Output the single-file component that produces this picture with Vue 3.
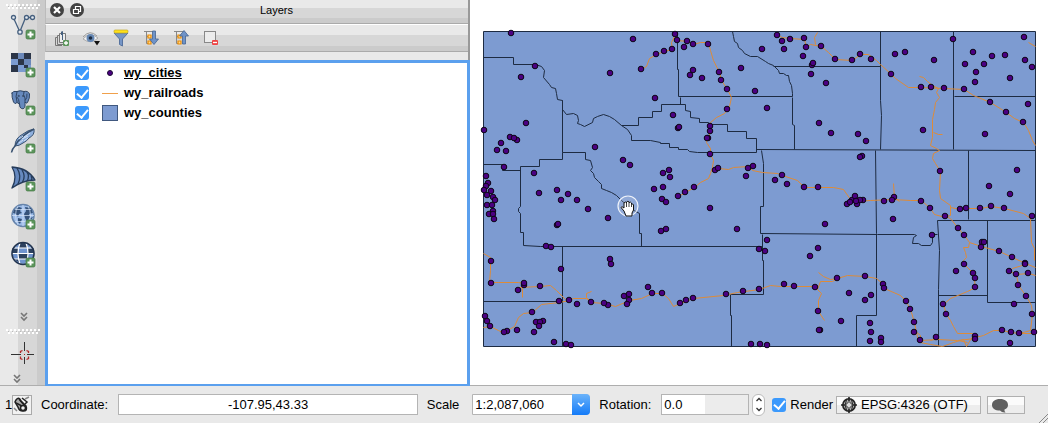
<script setup>
import { ref } from 'vue'

const layers = ref([
  { name: 'wy_cities', kind: 'point', on: true, current: true },
  { name: 'wy_railroads', kind: 'line', on: true, current: false },
  { name: 'wy_counties', kind: 'fill', on: true, current: false }
])
const coordinate = ref('-107.95,43.33')
const rotation = ref('0.0')
const render = ref(true)

const sources = [
  { id: 'vector', label: 'Add vector layer' },
  { id: 'raster', label: 'Add raster layer' },
  { id: 'postgis', label: 'Add PostGIS layer' },
  { id: 'spatialite', label: 'Add SpatiaLite layer' },
  { id: 'mssql', label: 'Add MSSQL layer' },
  { id: 'wms', label: 'Add WMS layer' },
  { id: 'wfs', label: 'Add WFS layer' }
]

const counties = [
  'M483 31H1035V346H483Z',
  'M483 57H513V64H535L541 66 544 70 543 77 549 84 551 87 555 88 556 93 557 99 562 100V152H585V159L590 160 592 167 590 170 593 173 594 177 598 181 601 184 601 188 606 190 611 192 616 195 621 200 630 208 639 213V233H641V246',
  'M562 152V159H539V166H520V206L518 208V211L520 213V232H523V245L540 246H762',
  'M483 164H502V170H520',
  'M562 246V346M483 301H562',
  'M562 100V109L566 114 573 113 577 115 578 120 577 123 580 124 584 126 592 122 593 118 597 116 603 114 609 116 614 119 621 125 627 129 631 135V140H650L660 142V143H669V147H678V149H687L689 151 697 152H756V138H746V131H727V124H709L708 122H699V118L690 117V111L685 110V104H661V111H652V117H638V125H621',
  'M677 31V69H678V96H792V93L791 85 789 81 788 75 786 75 783 73 779 73 778 70 773 65 768 63 765 61 757 56 750 56 744 53 742 50 738 47 737 43 734 41 733 36 732 31',
  'M680 97V104M773 66H880M792 97V124L794 125V149M756 149L1035 150',
  'M761 150L763 163V206H760V233M762 234V260H763V294H730V315H731V346',
  'M760 233L877 234H914L916 235 913 237 912 243 918 243 921 245H930L932 242V236L933 234H937',
  'M880 31V100L881 115 880 149M953 31V149M954 96H1035M875 150L876 233V315H856V346M968 150V219',
  'M937 220H1035M937 220L939 250 938 289V346M987 220V302H1035M938 295H987'
]

const railroads = [
  'M641 69L646 66 649 58 656 54 664 51 672 49 671 42 675 34 677 40 687 41 693 44 700 42 708 42 710 50 713 60 719 72 721 80 727 89 731 97 729 106 727 109 724 113 716 117 710 122 711 130 707 138 706 142 710 148 710 154 713 160 712 167 710 173 708 178 700 182 694 187 685 192 678 196',
  'M715 170L718 168 728 169 733 167 748 166 752 170 762 172 777 173 782 175 797 180 804 187 818 187 833 187 843 189 850 199 855 201 870 200 892 199 910 200 921 200 930 208 934 214 945 217',
  'M893 183L894 197 899 201M777 35L782 37 790 38 804 39 806 47 810 44 821 46 828 52 835 59 852 60 860 54 868 54 876 60 880 64 891 74 895 78 908 87 921 87 964 89 973 95 990 102 1006 112 1014 118 1023 122 1028 130 1032 140 1035 145',
  'M815 44L814 37 817 32M919 76L923 77 927 81 932 85 938 88 936 92 939 97 935 102 934 109 932 119 932 137 930 145 936 148 939 150 933 153 932 158 935 163 940 171 939 190 940 198 950 205 950 215 945 216M950 207L960 209M933 132L938 134 942 134M1028 42L1035 46',
  'M945 216L950 218 958 228 964 235 969 242 981 246 999 251 1012 257 1025 263 1035 267M969 242L968 247 963 247 965 252 966 257 963 260 964 264 973 273 975 287 967 291 950 298 943 304 946 314 950 320 953 326 957 333 972 333 975 337 983 335 993 330 1002 330 1011 332 1019 333 1030 330 1032 314 1031 305 1026 296 1018 285 1016 274 1009 271 1012 268 1025 264',
  'M1016 274L1028 273 1035 275M960 209L966 208 980 208 991 206 1004 208 1023 213 1030 218 1031 242 1034 248 1034 260M1019 333L1034 333',
  'M483 253L490 257 490 270 489 282 498 282 518 282 524 283M522 285L522 297M518 287L540 286 550 285 556 290 565 299',
  'M483 327L490 326 498 330 504 333 507 330 514 326 518 317 523 313 532 312 541 304 559 302 569 300 573 298 586 298 591 302 604 303 615 306 629 300 641 298 652 293 662 293 668 298 673 306 680 303 693 298 723 295 737 292 759 289 770 285 780 286 812 286 817 289 820 281 832 281 837 278 847 275 865 276 876 278 883 284 884 288 900 295 906 301 911 312 914 322 917 337 920 340 938 339 957 340 975 338',
  'M589 300L586 297 586 293 591 291M818 272L823 276 830 279 837 278M817 289L821 293 818 300 818 311 824 320M920 342L930 344 942 346 953 342 963 339 966 346 972 336M958 340L967 342M914 330L920 335 920 340M930 340L938 337'
]

const cities = `511,33 535,66 521,77 633,39 610,73 641,69 656,54 664,51 672,49 675,34 677,40 655,98 673,115 678,128
526,123 484,130 510,137 517,140 514,138 501,143 497,150 506,151 504,167 534,173 486,176 488,183 486,186 595,147
623,160 630,165 669,170 663,173 670,177 654,189 663,187 557,190 484,190 491,191 487,195 493,197 495,200 487,205
492,205 493,211 489,214 493,214 494,219 539,193 561,200 568,194 577,200 588,209 608,218 557,225 558,224 546,246
551,247 561,269 491,261 491,283 524,285 524,283 518,290 540,286 610,259 611,264 648,287 652,293 662,293 624,296
629,294 629,300 627,304 608,305 604,303 591,302 577,304 569,300 559,301 532,312 536,322 543,321 540,322 539,326
534,332 517,330 507,331 504,332 490,326 487,321 485,316 554,342 566,344 571,345 662,199 666,202 666,229 661,231
678,196 680,303 687,41 684,47 693,44 708,44 693,70 690,75 702,78 719,72 721,80 727,89 741,68 755,91 762,49
727,109 767,108 679,127 710,126 710,131 708,138 707,138 710,154 715,170 718,168 748,168 753,166 746,176 775,180
782,175 787,184 804,187 818,187 694,187 777,35 782,41 790,39 784,49 804,38 806,47 803,56 821,46 835,59 852,60
860,54 812,65 813,63 811,74 826,83 819,123 831,133 858,134 866,141 862,156 860,157 685,192 710,208 737,229
767,240 759,249 765,251 818,248 810,256 825,224 847,204 852,200 850,202 855,196 857,204 863,200 860,200 856,201
837,278 865,276 815,287 794,286 784,284 759,289 743,291 726,294 693,298 686,300 849,293 865,300 818,311 841,321
820,330 819,330 751,344 760,344 767,345 871,59 891,74 895,54 905,52 934,60 953,39 973,52 965,64 976,72 975,82
984,64 992,56 1005,55 1024,37 1025,60 1032,67 1010,78 921,87 931,87 944,88 964,89 990,102 1006,112 1023,122
1028,104 923,130 985,134 940,171 1017,170 989,186 884,201 894,197 892,200 893,219 921,201 930,208 945,216
932,235 960,209 966,208 980,208 991,206 1004,208 1032,216 1010,194 958,228 964,235 982,242 984,242 981,247
999,251 1012,257 1025,263 1025,264 1009,271 1016,274 1028,273 1018,285 1026,296 1014,304 1032,314 1034,332
1019,333 1011,332 1002,330 1010,343 975,336 975,339 946,314 943,304 964,264 956,271 973,273 975,278 975,287
883,284 884,288 871,295 906,301 910,309 914,322 914,332 920,340 936,337 870,323 871,332 870,341 881,338
881,342`.split(/\s+/).map(p => p.split(',').map(Number))
</script>

<template>
  <div class="app">
    <main class="work">
      <nav class="tools" aria-label="Manage layers">
        <svg class="handle" viewBox="0 0 36 6"><g fill="#fff"><rect v-for="n in 9" :key="n" :x="n * 4 - 4" y="0" width="2" height="2" /><rect v-for="n in 8" :key="'b' + n" :x="n * 4 - 2" y="3" width="2" height="2" /></g><g fill="#bbb"><rect v-for="n in 8" :key="'c' + n" :x="n * 4 - 2" y="2" width="1" height="1" /></g></svg>
        <button v-for="s in sources" :key="s.id" class="tool" type="button" :aria-label="s.label">
          <svg viewBox="0 0 26 28" width="26" height="28">
            <g v-if="s.id === 'vector'" fill="#e4e9f0" stroke="#46607f" stroke-width="1.3">
              <path d="M4 7L9 18M10.500 18L15 7M18 5.500H21" fill="none" />
              <circle cx="3.500" cy="5.500" r="2" /><circle cx="10" cy="20" r="2.200" /><circle cx="16.500" cy="5.500" r="2" /><circle cx="22.500" cy="5.500" r="2" />
            </g>
            <g v-else-if="s.id === 'raster'">
              <path fill="#7b9bd0" d="M1 3H21V22H1Z" />
              <path fill="#2b3547" d="M1 3H8V9H1ZM14 3H21V9H14ZM8 9H14V15H8ZM1 15H8V22H1ZM14 15H18V18H14Z" />
              <path fill="#4d6590" d="M8 3H14V9H8ZM14 9H21V15H14Z" opacity=".35" />
            </g>
            <g v-else-if="s.id === 'postgis'" stroke="#2f4564" stroke-linejoin="round" stroke-linecap="round">
              <path fill="#6689bd" d="M2 5Q3 2.500 7 3.500Q10 2 14 3.500Q18 2.500 19.500 6Q20 10 17.500 14.500Q16 16 15 14V18Q14.500 21.500 11.500 20.500Q9.500 20 9.500 16L7 14.500Q5 17 3.500 14Q1.500 9 2 5Z" />
              <path fill="none" d="M7 3.500Q5 8 7 14M14 3.500Q12.500 7 15 10V14M7 9Q9 10 9.500 16M17 6Q17.500 10 15.500 12" />
              <circle cx="8.500" cy="8" r=".6" fill="#fff" /><circle cx="13" cy="8" r=".6" fill="#fff" />
            </g>
            <g v-else-if="s.id === 'spatialite'" stroke="#37506f" stroke-linejoin="round">
              <path fill="#8fb0de" d="M5 20Q5 12 13 8Q18 4 24 3Q25 9 19 12Q17 15 13 17Q9 20 5 20Z" />
              <path d="M24 3Q10 10 5 20Q2 23 1.500 26.500" fill="none" stroke-width="1.500" />
              <path d="M9 17L13 14M12 13L18 10M9 13L13 10M14 11L20 7M14 15L18 12" fill="none" stroke="#d5e2f5" />
            </g>
            <g v-else-if="s.id === 'mssql'" stroke="#263c5b" stroke-linejoin="round" stroke-width="1.300">
              <path fill="#6689bf" d="M2 3Q18 4 25 16Q13 16 2 24Q8 13 2 3Z" />
              <path fill="none" d="M7 4Q12 12 8 20M12 6Q16 12 12.500 18M17 8Q20 12 17 17M21 12Q22.500 14 21.500 16" />
            </g>
            <g v-else-if="s.id === 'wms'">
              <circle cx="13" cy="13.500" r="11" fill="#9bbbe8" stroke="#6684ab" stroke-width="1.500" />
              <path fill="#35527a" d="M4 8L9 5L12 6L10 9L12 11L9 12L8 15L6 12L3 11ZM8 16L12 17L10 22L8 20ZM15 5L21 6L23 11L19 12L20 15L17 20L15 16L14 12L16 9ZM20 16L23 15L21 18Z" />
              <path stroke="#d5e4f8" stroke-width=".7" fill="none" d="M2 13.500H24M5 7.500H21M5 19.500H21M13 3V24M8 4Q3 13 8 23M18 4Q23 13 18 23" />
            </g>
            <g v-else>
              <circle cx="13" cy="13.500" r="10.500" fill="#6f94cf" />
              <path fill="#2c415f" d="M9 3H17V8H9ZM8 14H18V19H8ZM2 8.500H8V13H2ZM18 8.500H24V13H18ZM4 19H8L10 23Z" />
              <path stroke="#fff" stroke-width="1.200" fill="none" d="M4 8H22M2 13.500H24M4 19H22M10 3Q6 13 10 24M16 3Q20 13 16 24" />
              <circle cx="13" cy="13.500" r="11" fill="none" stroke="#22344f" stroke-width="1.600" />
            </g>
            <rect x="16" y="18" width="9" height="9" rx="1.500" fill="#5b955b" stroke="#467a46" stroke-width=".7" />
            <path d="M20.500 19.500V25.500M17.500 22.500H23.500" stroke="#fff" stroke-width="2" />
          </svg>
        </button>
        <button class="more push" type="button" aria-label="More layer tools"><svg viewBox="0 0 8 10" width="8" height="10"><path d="M1 1L4 4L7 1M1 5L4 8L7 5" fill="none" stroke="#777" stroke-width="1.600" /></svg></button>
        <svg class="handle second" viewBox="0 0 36 6"><g fill="#fff"><rect v-for="n in 9" :key="n" :x="n * 4 - 4" y="0" width="2" height="2" /><rect v-for="n in 8" :key="'b' + n" :x="n * 4 - 2" y="3" width="2" height="2" /></g><g fill="#bbb"><rect v-for="n in 8" :key="'c' + n" :x="n * 4 - 2" y="2" width="1" height="1" /></g></svg>
        <button class="tool" type="button" aria-label="Capture coordinate">
          <svg viewBox="0 0 24 24" width="24" height="24"><path d="M1 12.500H11M17 12.500H24M14.500 0V9M14.500 15V22" stroke="#333" fill="none" /><path d="M10.500 11V9.500L12.500 8.500M16.500 8.500L18.500 9.500V11M10.500 14.500V16.500L12.500 17.500M16.500 17.500L18.500 16.500V14.500" stroke="#b22a2a" stroke-width="1.300" fill="none" /><path d="M14 12H15V13H14Z" fill="#b22a2a" /></svg>
        </button>
        <button class="more low" type="button" aria-label="More tools"><svg viewBox="0 0 8 10" width="8" height="10"><path d="M1 1L4 4L7 1M1 5L4 8L7 5" fill="none" stroke="#777" stroke-width="1.600" /></svg></button>
      </nav>

      <section class="panel">
        <header class="title">
          <button class="round" type="button" aria-label="Close panel"><svg viewBox="0 0 14 14" width="14" height="14"><circle cx="7" cy="7" r="7" fill="#424242" /><path d="M4 4L10 10M10 4L4 10" stroke="#fff" stroke-width="2.200" /></svg></button>
          <button class="round" type="button" aria-label="Float panel"><svg viewBox="0 0 14 14" width="14" height="14"><circle cx="7" cy="7" r="7" fill="#424242" /><path d="M5.500 6V3.500H10.500V8.500H9M3.500 6.500H8.500V10.500H3.500Z" fill="none" stroke="#fff" stroke-width="1.200" /></svg></button>
          <h1>Layers</h1>
        </header>
        <div class="actions">
          <button type="button" aria-label="Add group"><svg viewBox="0 0 18 18" width="18" height="18"><g fill="#eee" stroke="#777"><path d="M7.500 4.500H13.500V13.500H7.500Z" /><path d="M5.500 6.500V15.500H11M3.500 8.500V16.500H10M3.500 8.500H5.500M5.500 6.500H7.500" fill="none" /></g><path d="M10.500 11V3Q10.500 1.500 9.500 3V6" fill="none" stroke="#46607f" /><rect x="11" y="11" width="6" height="6" rx="1" fill="#5b955b" /><path d="M14 12V16M12 14H16" stroke="#fff" stroke-width="1.300" /></svg></button>
          <button type="button" aria-label="Manage visibility"><svg viewBox="0 0 20 18" width="20" height="18"><path d="M2 10Q9 2 17 9Q10 16 2 10Z" fill="#f5f5f5" stroke="#aaa" /><path d="M2 8Q9 0 16 7" fill="none" stroke="#999" /><circle cx="9.500" cy="9" r="4" fill="#6688b4" /><circle cx="9.500" cy="9" r="1.800" fill="#1d2c42" /><path d="M13 12H19L16 16.500Z" fill="#111" /></svg></button>
          <button type="button" aria-label="Filter legend"><svg viewBox="0 0 18 18" width="18" height="18"><path d="M2 4L7.500 10V15.500L10.500 17V10L16 4Z" fill="#7595c6" stroke="#56729e" /><rect x="2" y="1" width="14" height="3" rx="1" fill="#ffe21a" stroke="#c4a928" stroke-width=".7" /></svg></button>
          <button type="button" aria-label="Expand all"><svg viewBox="0 0 18 18" width="18" height="18"><path d="M2 2.500H12M4.500 3V14.500H6M4.500 7.500H6" fill="none" stroke="#888" /><path d="M6 6H9V9H6ZM6 12H9V15H6Z" fill="#ffd98a" stroke="#ed8b00" stroke-width="1.200" /><path d="M10.500 2H13.500V10H16.500L12 15.500L7.500 10H10.500Z" fill="#6f93c8" stroke="#456391" stroke-width=".8" /></svg></button>
          <button type="button" aria-label="Collapse all"><svg viewBox="0 0 18 18" width="18" height="18"><path d="M2 2.500H12M4.500 3V14.500H6M4.500 7.500H6" fill="none" stroke="#888" /><path d="M6 6H9V9H6ZM6 12H9V15H6Z" fill="#ffd98a" stroke="#ed8b00" stroke-width="1.200" /><path d="M10.500 15H13.500V7H16.500L12 1.500L7.500 7H10.500Z" fill="#6f93c8" stroke="#456391" stroke-width=".8" /></svg></button>
          <button type="button" aria-label="Remove layer"><svg viewBox="0 0 18 18" width="18" height="18"><rect x="2.500" y="2.500" width="11" height="11" fill="#ececec" stroke="#888" /><rect x="10" y="11" width="6" height="5" rx="1" fill="#ee4444" /><path d="M11 13.500H15" stroke="#fff" stroke-width="1.300" /></svg></button>
        </div>
        <ul class="tree">
          <li v-for="l in layers" :key="l.name">
            <label>
              <input v-model="l.on" class="tick" type="checkbox">
              <svg viewBox="0 0 16 16" width="16" height="16">
                <circle v-if="l.kind === 'point'" cx="8" cy="8" r="2.500" fill="#4b0082" stroke="#1c0a33" />
                <path v-else-if="l.kind === 'line'" d="M0 8.500H16" stroke="#f0a04b" />
                <rect v-else x=".5" y=".5" width="15" height="15" fill="#7d9bd1" stroke="#40587f" />
              </svg>
              <span :class="{ current: l.current }">{{ l.name }}</span>
            </label>
          </li>
        </ul>
      </section>

      <section class="canvas" aria-label="Map">
        <svg viewBox="470 0 578 385" preserveAspectRatio="xMidYMid meet">
          <g transform="translate(.5 .5)">
            <path :d="counties[0]" fill="#7d9bd1" />
            <path v-for="c in counties" :key="c" :d="c" class="county" />
            <path v-for="r in railroads" :key="r" :d="r" class="rail" />
          </g>
          <circle v-for="(c, i) in cities" :key="i" :cx="c[0]" :cy="c[1]" r="2.800" class="city" />
          <circle cx="628" cy="206" r="10" fill="#fff" fill-opacity=".15" stroke="#eef2fa" stroke-width="1.200" />
          <path d="M626 216L624 211L621 207.500Q621.500 205.500 624 208V203Q625.500 201 626.500 203V202Q628 200.500 629 202V202.500Q630.500 201.500 631.500 203V204Q633 203.500 633.500 205V210L632 213V216Z" fill="#fff" stroke="#111" />
          <path d="M626.500 203V207M629 202.500V207M631.500 204V207" stroke="#111" stroke-width=".8" />
        </svg>
      </section>
    </main>

    <footer class="status">
      <span class="count">1</span>
      <button class="mouse" type="button" aria-label="Toggle extents and mouse position"><svg viewBox="0 0 18 18" width="18" height="18"><g fill="none" stroke="#222" stroke-width="1.500"><path d="M3 4Q6 0 8 5L13 10Q15 15 10 15Q6 15 5 11L2 6Z" fill="#aaa" /><path d="M6 3L11 9M3 7L9 10M9 2L14 6L12 8" /><circle cx="10" cy="12" r="2.500" fill="#eee" /><path d="M12 3L16 1M1 12L4 15" stroke="#888" /></g></svg></button>
      <label class="lab-coord" for="coord">Coordinate:</label>
      <input id="coord" v-model="coordinate" class="field coord" type="text">
      <label class="lab-scale" for="scale">Scale</label>
      <div class="combo">
        <select id="scale"><option>1:2,087,060</option></select>
        <svg viewBox="0 0 18 21" width="18" height="21"><path d="M6 9L9 12L12 9" fill="none" stroke="#fff" stroke-width="1.500" /></svg>
      </div>
      <label class="lab-rot" for="rot">Rotation:</label>
      <input id="rot" v-model="rotation" class="field rot" type="text">
      <div class="stepper">
        <button type="button" aria-label="Increase rotation"><svg viewBox="0 0 8 5" width="8" height="5"><path d="M1.500 4L4 1.500L6.500 4" fill="none" stroke="#333" stroke-width="1.300" /></svg></button>
        <button type="button" aria-label="Decrease rotation"><svg viewBox="0 0 8 5" width="8" height="5"><path d="M1.500 1L4 3.500L6.500 1" fill="none" stroke="#333" stroke-width="1.300" /></svg></button>
      </div>
      <label class="render"><input v-model="render" class="tick" type="checkbox">Render</label>
      <button class="flat crs" type="button">
        <svg viewBox="0 0 16 16" width="16" height="16"><circle cx="8" cy="8" r="6.200" fill="#aaa" stroke="#222" stroke-width="1.600" /><path d="M8 0V4M8 12V16M0 8H4M12 8H16" fill="none" stroke="#222" stroke-width="1.600" /><path d="M5.500 2.500Q3 8 5.500 13.500M10.500 2.500Q13 8 10.500 13.500" fill="none" stroke="#222" /><path d="M8 4.500L11.500 8L8 11.500L4.500 8Z" fill="#ddd" stroke="#333" /></svg>
        <span>EPSG:4326 (OTF)</span>
      </button>
      <button class="flat msg" type="button" aria-label="Messages"><svg viewBox="0 0 16 16" width="16" height="16"><path d="M8 2C3 2 0 4.500 0 8S3 13.500 8 13.500Q10 16 13.500 15.500Q12 14 12.500 12.500Q16 11 16 8C16 4.500 13 2 8 2Z" fill="#606060" /></svg></button>
      <svg class="grip" viewBox="0 0 10 10" width="10" height="10"><path d="M1 10L10 1M5 10L10 5" stroke="#888" /></svg>
    </footer>
  </div>
</template>

<style>
body { margin: 0; }
</style>

<style scoped>
.app {
  display: flex;
  flex-direction: column;
  min-height: 100vh;
  background: #e9e9e9;
  color: #000;
  font: 13px/20px "Liberation Sans", Arial, sans-serif;
}
.app * { box-sizing: border-box; }
button { padding: 0; border: 0; background: none; font: inherit; color: inherit; }
svg { display: block; flex: none; }
.work {
  flex: 1;
  display: flex;
  min-height: 0;
  border-bottom: 1px solid #aeaeae;
}
.tools {
  flex: none;
  width: 45px;
  display: flex;
  flex-direction: column;
  padding-top: 4px;
  background: linear-gradient(90deg, #e9e9e9 18px, #d7d7d7 18px, #d7d7d7 37px, #cbcbcb 37px);
}
.handle { width: 36px; height: 6px; margin-left: 6px; margin-bottom: -3px; }
.handle.second { margin-bottom: 0; }
.tool { flex: none; display: flex; align-items: center; height: 38px; padding-left: 10px; }
.more { flex: none; padding-left: 20px; height: 18px; }
.push { margin-top: auto; margin-bottom: 3px; }
.low { padding-left: 13px; height: 12px; }
.panel {
  flex: none;
  width: 425px;
  display: flex;
  flex-direction: column;
  margin-bottom: -1px;
  border-right: 2px solid #999;
}
.title {
  display: flex;
  align-items: center;
  gap: 6px;
  height: 24px;
  padding: 0 0 3px 4px;
  border-bottom: 1px solid #aaa;
  border-left: 1px solid #bbb;
  background: linear-gradient(#e9e9e9 8px, #d7d7d7 8px, #d7d7d7 18px, #cbcbcb 18px);
}
h1 { flex: 1; margin: 0 5px 0 0; font-size: 11px; font-weight: 400; text-align: center; }
.actions {
  display: flex;
  height: 28px;
  border-top: 1px solid #fff;
  border-bottom: 1px solid #aaa;
  border-left: 1px solid #bbb;
  background: linear-gradient(#e9e9e9 10px, #d7d7d7 10px, #d7d7d7 21px, #cbcbcb 21px);
}
.actions button { width: 30px; display: flex; justify-content: center; align-items: center; }
.tree {
  flex: 1;
  margin: 8px -2px 0 0;
  padding: 0;
  list-style: none;
  background: #fff;
  border: 3px solid #5ba0ee;
  border-bottom-width: 2px;
}
.tree label { display: flex; align-items: center; height: 20px; padding-left: 27px; font-weight: 700; }
.tree svg { margin: 0 6px 0 13px; }
.current { text-decoration: underline; }
.tick {
  appearance: none;
  flex: none;
  width: 14px;
  height: 14px;
  margin: 0;
  border-radius: 3px;
  background: #3b99fc;
  display: grid;
  place-items: center;
}
.tick:checked::before {
  content: "";
  width: 5px;
  height: 9px;
  margin-top: -2px;
  border: solid #fff;
  border-width: 0 2px 2px 0;
  transform: rotate(40deg);
}
.canvas { flex: 1; min-width: 0; background: #fff; display: flex; align-items: center; }
.canvas svg { width: 100%; flex: 1; }
.county { fill: none; stroke: #1d2b42; stroke-width: 1; }
.rail { fill: none; stroke: #dc8b3a; stroke-width: 1; }
.city { fill: #4b0082; stroke: #0c0616; stroke-width: 1; }
.status {
  flex: none;
  position: relative;
  display: flex;
  align-items: center;
  height: 37px;
  padding: 0 23px 0 5px;
  white-space: nowrap;
}
.count { width: 7px; overflow: hidden; }
.mouse { width: 20px; height: 20px; border: 1px solid #aaa; background: #f2f2f2; }
.lab-coord { margin: 0 10px 0 9px; }
.field { height: 21px; padding: 0 2px; border: 1px solid #b4b4b4; background: #fff; font: inherit; border-radius: 0; }
.coord { flex: 1; min-width: 80px; text-align: center; }
.lab-scale { margin: 0 13px 0 9px; }
.combo { position: relative; width: 118px; }
.combo select {
  appearance: none;
  display: block;
  width: 100%;
  height: 21px;
  padding: 0 20px 0 2px;
  border: 1px solid #b4b4b4;
  border-radius: 0 4px 4px 0;
  background: #fff;
  font: inherit;
  color: inherit;
}
.combo svg { position: absolute; top: 0; right: 0; border-radius: 0 4px 4px 0; background: linear-gradient(#6bb3fa, #147bf8); }
.lab-rot { margin: 0 10px 0 9px; }
.rot { width: 88px; background: linear-gradient(90deg, #fff 43px, #ececec 43px); }
.stepper {
  display: flex;
  flex-direction: column;
  width: 13px;
  height: 22px;
  margin: 0 7px 0 3px;
  border: 1px solid #bbb;
  border-radius: 6px;
  background: #fff;
}
.stepper button { flex: 1; display: grid; place-items: center; }
.render { display: flex; align-items: center; gap: 4px; margin-right: 3px; }
.flat { display: flex; align-items: center; height: 18px; border: 1px solid #b0b0b0; background: linear-gradient(#fbfbfb 8px, #ededed 8px); }
.crs { width: 145px; gap: 4px; padding-left: 4px; }
.msg { width: 38px; margin-left: 6px; padding-left: 4px; }
.grip { position: absolute; right: 0; bottom: 0; }
</style>
